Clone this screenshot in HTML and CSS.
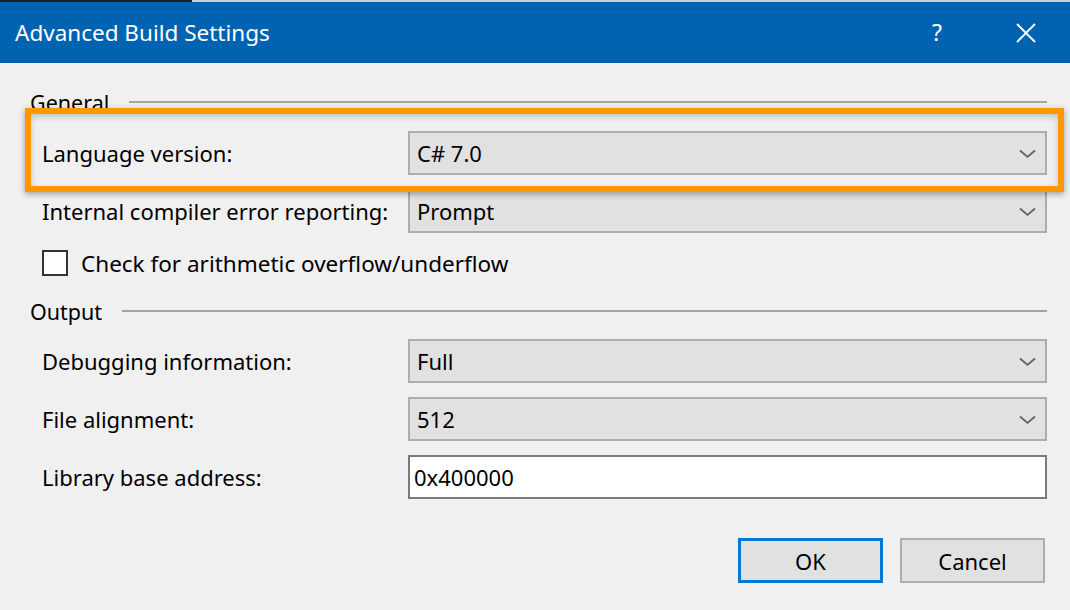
FILE: index.html
```html
<!DOCTYPE html>
<html>
<head>
<meta charset="utf-8">
<link rel="stylesheet" href="styles.css">
</head>
<body>
<div class="dialog">
  <div class="topstrip"><div class="strip-dark"></div><div class="strip-light"></div></div>
  <div class="titlebar">
    <div class="title">Advanced Build Settings</div>
    <div class="title-actions">
      <span class="help">?</span>
      <span class="close">
        <svg width="20" height="20" viewBox="0 0 20 20"><path d="M1 1 L19 19 M19 1 L1 19" stroke="#fff" stroke-width="1.8" fill="none"/></svg>
      </span>
    </div>
  </div>
  <div class="content">
    <div class="group-head g-general"><span class="group-label">General</span><span class="group-line"></span></div>
    <div class="row r-lang">
      <div class="label">Language version:</div>
      <div class="combo"><span class="value">C# 7.0</span><svg class="chev" width="17" height="10" viewBox="0 0 17 10"><polyline points="1,1.5 8.5,8 16,1.5" stroke="#606060" stroke-width="1.7" fill="none"/></svg></div>
    </div>
    <div class="row r-next">
      <div class="label">Internal compiler error reporting:</div>
      <div class="combo"><span class="value">Prompt</span><svg class="chev" width="17" height="10" viewBox="0 0 17 10"><polyline points="1,1.5 8.5,8 16,1.5" stroke="#606060" stroke-width="1.7" fill="none"/></svg></div>
    </div>
    <div class="check-row">
      <span class="checkbox"></span>
      <span class="check-label">Check for arithmetic overflow/underflow</span>
    </div>
    <div class="group-head g-output"><span class="group-label">Output</span><span class="group-line"></span></div>
    <div class="row r-debug">
      <div class="label">Debugging information:</div>
      <div class="combo"><span class="value">Full</span><svg class="chev" width="17" height="10" viewBox="0 0 17 10"><polyline points="1,1.5 8.5,8 16,1.5" stroke="#606060" stroke-width="1.7" fill="none"/></svg></div>
    </div>
    <div class="row r-next">
      <div class="label">File alignment:</div>
      <div class="combo"><span class="value">512</span><svg class="chev" width="17" height="10" viewBox="0 0 17 10"><polyline points="1,1.5 8.5,8 16,1.5" stroke="#606060" stroke-width="1.7" fill="none"/></svg></div>
    </div>
    <div class="row r-next">
      <div class="label">Library base address:</div>
      <div class="textbox"><span class="value">0x400000</span></div>
    </div>
    <div class="buttons">
      <button class="btn btn-default">OK</button>
      <button class="btn">Cancel</button>
    </div>
    <div class="highlight"></div>
  </div>
</div>
</body>
</html>
```

FILE: styles.css
```css
html, body {
  margin: 0;
  padding: 0;
  background: #f0f0f0;
}
.dialog {
  width: 1070px;
  height: 610px;
  overflow: hidden;
  font-family: "Noto Sans", "Open Sans", sans-serif;
  color: #000;
}
.topstrip {
  display: flex;
  height: 2px;
}
.strip-dark { width: 192px; background: #202020; }
.strip-light { flex: 1; background: #cfcfcf; }
.titlebar {
  height: 61px;
  background: #0063b1;
  display: flex;
  align-items: center;
  justify-content: space-between;
  color: #fff;
}
.title {
  padding-left: 15px;
  font-size: 22.5px;
}
.title-actions {
  display: flex;
  align-items: center;
  height: 100%;
}
.help {
  font-size: 23px;
  margin-right: 74px;
  margin-top: -2px;
}
.close {
  display: flex;
  align-items: center;
  justify-content: center;
  width: 20px;
  margin-right: 34px;
  height: 100%;
}
.content {
  position: relative;
  padding: 27px 23px 0 30px;
}
.group-head {
  display: flex;
  align-items: center;
  height: 24px;
  font-size: 21.5px;
}
.group-line {
  flex: 1;
  height: 2px;
  background: #a3a3a3;
  margin-left: 20px;
}
.g-output { margin-top: 23px; }
.row {
  display: flex;
  align-items: center;
  height: 44px;
  padding-left: 12px;
}
.r-lang { margin-top: 17px; }
.r-next { margin-top: 14px; }
.r-debug { margin-top: 16px; }
.label {
  width: 366px;
  font-size: 22px;
}
.combo, .textbox {
  flex: 1;
  height: 44px;
  box-sizing: border-box;
  border: 2px solid #adadad;
  background: #e1e1e1;
  display: flex;
  align-items: center;
  justify-content: space-between;
  padding: 0 9px 0 7px;
}
.textbox {
  background: #fff;
  border-color: #7a7a7a;
  padding-left: 4px;
}
.value {
  font-size: 22px;
}
.chev { margin-top: 2px; }
.check-row {
  display: flex;
  align-items: center;
  margin-top: 17px;
  padding-left: 12px;
  height: 26px;
}
.checkbox {
  width: 26px;
  height: 26px;
  box-sizing: border-box;
  border: 2px solid #333;
  background: #fff;
}
.check-label {
  margin-left: 13px;
  font-size: 22.5px;
}
.buttons {
  display: flex;
  justify-content: flex-end;
  gap: 17px;
  margin-top: 39px;
  margin-right: 2px;
}
.btn {
  width: 145px;
  height: 45px;
  box-sizing: border-box;
  border: 2px solid #adadad;
  background: #e1e1e1;
  font-family: "Noto Sans", "Open Sans", sans-serif;
  font-size: 22px;
  color: #000;
  padding: 0;
}
.btn-default {
  border: 3px solid #0078d7;
}
.highlight {
  position: absolute;
  left: 25px;
  top: 45px;
  width: 1039px;
  height: 84px;
  box-sizing: border-box;
  border: 6px solid #ff9800;
  box-shadow: 0 2px 6px rgba(0, 0, 0, 0.35), inset 0 3px 6px rgba(0, 0, 0, 0.2);
  pointer-events: none;
}
```
